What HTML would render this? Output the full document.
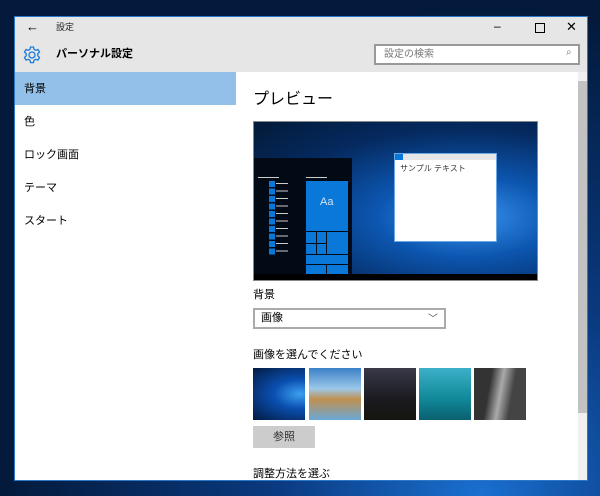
<html><head><style>
body{margin:0;width:600px;height:496px;overflow:hidden;position:relative;font-family:"Liberation Sans","Noto Sans CJK JP",sans-serif;
background:radial-gradient(ellipse at 80% 100%,#1a6fd0 0%,#0a3a80 30%,#031a3c 70%);}
.a{position:absolute}
.t{font-size:11px;color:#000;line-height:14px}
</style></head><body>
<div class="a" style="left:14px;top:16px;width:574px;height:465px;background:#fff;border:1px solid #2b78c8;box-sizing:border-box;overflow:hidden">
 <div class="a" style="left:0;top:0;width:574px;height:55px;background:#e6e6e6"></div>
 <div class="a" style="left:11px;top:2px;font-size:13px">←</div>
 <div class="a" style="left:41px;top:4px;font-size:9px;color:#222;line-height:12px">設定</div>
 <div class="a" style="left:479px;top:2px;font-size:12px">–</div>
 <div class="a" style="left:520px;top:6px;width:8px;height:8px;border:1px solid #000"></div>
 <div class="a" style="left:551px;top:2px;font-size:13px">✕</div>
 <svg class="a" style="left:7px;top:28px" width="20" height="20" viewBox="0 0 20 20"><g fill="none" stroke="#1979d8" stroke-width="1.3"><circle cx="10" cy="10" r="3"/><path d="M8.5 2h3l.5 2.3 1.8 1 2.2-.8 1.5 2.6-1.7 1.6v2.2l1.7 1.6-1.5 2.6-2.2-.8-1.8 1-.5 2.3h-3l-.5-2.3-1.8-1-2.2.8-1.5-2.6 1.7-1.6V8.7L2.5 7.1 4 4.5l2.2.8 1.8-1z"/></g></svg>
 <div class="a" style="left:41px;top:30px;font-size:11px;font-weight:bold;line-height:14px">パーソナル設定</div>
 <div class="a" style="left:359px;top:27px;width:206px;height:21px;border:2px solid #999;background:#fff;box-sizing:border-box"></div>
 <div class="a" style="left:369px;top:31px;font-size:10px;color:#777;line-height:13px">設定の検索</div>
 <div class="a" style="left:551px;top:30px;font-size:10px;color:#777">⌕</div>
 <div class="a" style="left:0;top:55px;width:221px;height:33px;background:#92c0e8"></div>
 <div class="a t" style="left:9px;top:65px">背景</div>
 <div class="a t" style="left:9px;top:98px">色</div>
 <div class="a t" style="left:9px;top:131px">ロック画面</div>
 <div class="a t" style="left:9px;top:164px">テーマ</div>
 <div class="a t" style="left:9px;top:197px">スタート</div>
 <div class="a" style="left:238px;top:73px;font-size:16px;line-height:20px">プレビュー</div>
 <div class="a" style="left:238px;top:104px;width:285px;height:160px;background:radial-gradient(ellipse at 75% 60%,#3a95f0 0%,#0c56b0 30%,#052a60 65%,#031a38);border:1px solid #888;box-sizing:border-box;overflow:hidden">
  <div class="a" style="left:0;top:36px;width:98px;height:116px;background:#020a16"></div>
  <div class="a" style="left:15px;top:59px;width:6px;height:75px;background:repeating-linear-gradient(#0a78d8 0 6px,#020a16 6px 7.5px)"></div>
  <div class="a" style="left:22px;top:61px;width:12px;height:72px;background:repeating-linear-gradient(#ccc 0 1px,transparent 1px 7.5px)"></div>
  <div class="a" style="left:4px;top:55px;width:21px;height:1px;background:#ccc"></div>
  <div class="a" style="left:52px;top:55px;width:21px;height:1px;background:#ccc"></div>
  <div class="a" style="left:52px;top:59px;width:42px;height:93px;background:#0a78d8"></div>
  <div class="a" style="left:52px;top:109px;width:42px;height:1px;background:#020a16"></div>
  <div class="a" style="left:52px;top:142px;width:42px;height:1px;background:#020a16"></div>
  <div class="a" style="left:62px;top:110px;width:1px;height:22px;background:#020a16"></div>
  <div class="a" style="left:72px;top:110px;width:1px;height:22px;background:#020a16"></div>
  <div class="a" style="left:52px;top:121px;width:20px;height:1px;background:#020a16"></div>
  <div class="a" style="left:52px;top:132px;width:42px;height:1px;background:#020a16"></div>
  <div class="a" style="left:72px;top:142px;width:1px;height:10px;background:#020a16"></div>
  <div class="a" style="left:66px;top:74px;color:#cfe3f7;font-size:11px">Aa</div>
  <div class="a" style="left:0;top:152px;width:285px;height:8px;background:#000"></div>
  <div class="a" style="left:140px;top:31px;width:103px;height:89px;background:#fff;border:1px solid #6aa8e8;box-sizing:border-box"></div>
  <div class="a" style="left:141px;top:32px;width:101px;height:6px;background:#e6e6e6"></div>
  <div class="a" style="left:141px;top:32px;width:8px;height:6px;background:#0a78d8"></div>
  <div class="a" style="left:146px;top:41px;font-size:8px;color:#333">サンプル テキスト</div>
 </div>
 <div class="a t" style="left:238px;top:271px">背景</div>
 <div class="a" style="left:238px;top:291px;width:193px;height:21px;border:2px solid #aaa;box-sizing:border-box"></div>
 <div class="a t" style="left:246px;top:294px">画像</div>
 <div class="a" style="left:413px;top:293px;font-size:10px;color:#555">﹀</div>
 <div class="a t" style="left:238px;top:331px">画像を選んでください</div>
 <div class="a" style="left:238px;top:351px;width:52px;height:52px;background:radial-gradient(ellipse at 90% 50%,#3ca0f0,#0a4fb0 40%,#031a40)"></div>
 <div class="a" style="left:294px;top:351px;width:52px;height:52px;background:linear-gradient(#3a80c8,#9cc8e8 40%,#c09050 60%,#6aa8d8)"></div>
 <div class="a" style="left:349px;top:351px;width:52px;height:52px;background:linear-gradient(#3a3a48,#1a1a20 60%,#151510)"></div>
 <div class="a" style="left:404px;top:351px;width:52px;height:52px;background:linear-gradient(#3cb0c8,#108898 60%,#0a6070)"></div>
 <div class="a" style="left:459px;top:351px;width:52px;height:52px;background:linear-gradient(100deg,#333 30%,#aaa 50%,#444 70%)"></div>
 <div class="a" style="left:238px;top:409px;width:62px;height:22px;background:#ccc"></div>
 <div class="a t" style="left:258px;top:413px;color:#333">参照</div>
 <div class="a t" style="left:238px;top:450px">調整方法を選ぶ</div>
 <div class="a" style="left:563px;top:55px;width:10px;height:410px;background:#f0f0f0"></div>
 <div class="a" style="left:563px;top:64px;width:10px;height:332px;background:#c2c2c2"></div>
</div>
</body></html>
